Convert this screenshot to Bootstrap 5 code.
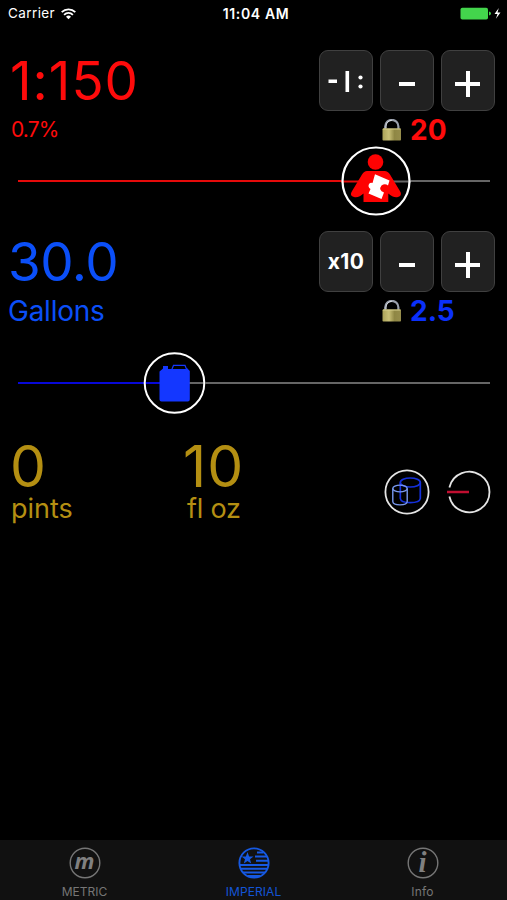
<!DOCTYPE html>
<html lang="en">
<head>
<meta charset="utf-8">
<meta name="viewport" content="width=device-width, initial-scale=1">
<title>Fuel mix</title>
<link href="https://cdn.jsdelivr.net/npm/bootstrap@5.3.0/dist/css/bootstrap.min.css" rel="stylesheet">
<style>
body{background:#000;font-family:Inter,"Liberation Sans",sans-serif;color:#fff;height:900px;overflow:hidden}
svg{display:block;flex:none;overflow:visible}
.status{height:27px;font-size:13.5px;padding:0 6px 0 8px}
.status>div{flex:1 1 0}
.ctl{height:61px;padding:0 12px 0 10px}
.sub{height:37px;padding-left:11px}
.big{font-size:53px;line-height:62px;font-weight:400}
.red{color:#fe0b0b}.blue{color:#0b4ff8}.gold{color:#b48f12}
.keys{gap:7px}
.key{width:54px;height:61px;background:#212121;border:1px solid #404040;border-radius:9px;padding:0;color:#fff;font-weight:700;font-size:21px}
.lock-val{width:125px;font-size:28px;font-weight:700;gap:8px}
.slider{padding:0 17px 0 18px}
.bar-line{height:2px;background:#666}
.tabs{height:60px;background:#111;font-size:12px;color:#767676}
.tab{padding-top:7px;line-height:14px;gap:6px;color:#767676;text-decoration:none}
.tab.on{color:#1355d6}
.unit{font-size:27px;line-height:24px;font-weight:400}
.amount{font-size:57px;line-height:60px;font-weight:400}
</style>
<script src="https://cdn.jsdelivr.net/npm/bootstrap@5.3.0/dist/js/bootstrap.bundle.min.js"></script>
</head>
<body class="d-flex flex-column m-0">
<svg width="0" height="0" class="position-absolute">
  <defs>
    <linearGradient id="brass"><stop offset="0" stop-color="#aaa258"/><stop offset=".35" stop-color="#c9c077"/><stop offset=".65" stop-color="#8f8744"/><stop offset="1" stop-color="#968d4c"/></linearGradient>
    <symbol id="lock" viewBox="0 0 20 22"><path d="M3.2 11V7.5a6.6 6.6 0 0 1 13.2 0V11" fill="none" stroke="#9aa0ac" stroke-width="2.2"/><path d="M4 9V7.2A6 6 0 0 1 10 1.2" fill="none" stroke="#d5dae0" stroke-width="1"/><rect x=".5" y="9.5" width="18.500" height="12" rx=".8" fill="url(#brass)"/><path d="M1 10h17.500" stroke="#d8d08d"/></symbol>
  </defs>
</svg>

<header class="status d-flex align-items-center">
  <div class="d-flex align-items-center"><span style="letter-spacing:.4px">Carrier</span>
    <svg width="15" height="12" viewBox="0 0 15 12" style="margin-left:6px" fill="none" stroke="#fff" stroke-width="1.800"><path d="M.7 4.100a9.600 9.600 0 0 1 13.600 0M3.100 6.800a6.200 6.200 0 0 1 8.800 0"/><path d="M7.500 11.300 5 8.800a3.500 3.500 0 0 1 5 0z" fill="#fff" stroke="none"/></svg>
  </div>
  <span class="fw-semibold" style="font-size:14px;letter-spacing:.65px;padding-left:3px">11:04 AM</span>
  <div class="d-flex justify-content-end align-items-center">
    <svg width="41" height="13" viewBox="0 0 41 13"><rect x=".5" y=".7" width="27.500" height="11.800" rx="1.800" fill="#43d54c"/><path d="M29 4.500q2 .3 2 2t-2 2z" fill="#43d54c"/><path d="M38.800.9 34.500 7h3l-1.600 4.800 4.600-6.300h-3z" fill="#fff"/></svg>
  </div>
</header>

<main class="flex-grow-1">
  <section style="padding-top:23px">
    <div class="ctl d-flex justify-content-between">
      <div class="big red" style="letter-spacing:1px">1:150</div>
      <div class="keys d-flex">
        <button class="btn key d-flex align-items-center justify-content-center" aria-label="Ratio format"><svg width="36" height="24" viewBox="0 0 36 24" fill="#fff"><path d="M.5 10.500h8.500v3.500H.5zM17.500 2h3.600v21h-3.600z"/><circle cx="32.500" cy="8.500" r="2.100"/><circle cx="32.500" cy="17.500" r="2.100"/></svg></button>
        <button class="btn key d-flex align-items-center justify-content-center" aria-label="Less"><svg width="16" height="4" viewBox="0 0 16 4" style="margin-top:7px"><path d="M0 0h16v4H0z" fill="#fff"/></svg></button>
        <button class="btn key d-flex align-items-center justify-content-center" aria-label="More"><svg width="26" height="26" viewBox="0 0 26 26" style="margin-top:7px"><path d="M0 11H11V0h4v11h10v4H15v11h-4V15H0z" fill="#fff"/></svg></button>
      </div>
    </div>
    <div class="sub d-flex align-items-center justify-content-between">
      <span class="red" style="font-size:21px;letter-spacing:-.9px">0.7%</span>
      <div class="lock-val d-flex align-items-center red"><svg width="20" height="22"><use href="#lock"/></svg><span>20</span></div>
    </div>
    <div class="slider d-flex align-items-center" style="height:65px">
      <div class="bar-line" style="width:323px;background:#e60a0a"></div>
      <svg width="70" height="70" viewBox="-35 -35 70 70">
        <path d="M-35 .5H0" stroke="#e60a0a" stroke-width="2"/><path d="M0 .5H35" stroke="#666" stroke-width="2"/>
        <circle r="33.500" fill="none" stroke="#fff" stroke-width="2.200"/>
        <circle cx="-.5" cy="-19" r="7.800" fill="#fe0202"/>
        <path d="M-9-10H8.500Q12-10 14-6.500L24.500 11Q26 15 22 16Q17 17 12.300 12.500V21H-12.500V12.500Q-17 17-22 16Q-26.500 15-24.500 11L-14-6.500Q-12-10-9-10Z" fill="#fe0202"/>
        <path d="M-1-6.800 13.500-.5 12 4.500Q9 2 5.500 4.500 2 9 8 11.500L5.500 18-7.500 12.500-5.500 8Q-8.500 6-7 3-5.500 1-3.500 2Z" fill="#fff"/>
      </svg>
      <div class="bar-line flex-grow-1"></div>
    </div>
  </section>

  <section style="padding-top:18px">
    <div class="ctl d-flex justify-content-between">
      <div class="big blue" style="letter-spacing:-.5px;margin-left:-2px">30.0</div>
      <div class="keys d-flex">
        <button class="btn key"><span style="letter-spacing:.3px">x10</span></button>
        <button class="btn key d-flex align-items-center justify-content-center" aria-label="Less"><svg width="16" height="4" viewBox="0 0 16 4" style="margin-top:7px"><path d="M0 0h16v4H0z" fill="#fff"/></svg></button>
        <button class="btn key d-flex align-items-center justify-content-center" aria-label="More"><svg width="26" height="26" viewBox="0 0 26 26" style="margin-top:7px"><path d="M0 11H11V0h4v11h10v4H15v11h-4V15H0z" fill="#fff"/></svg></button>
      </div>
    </div>
    <div class="sub d-flex align-items-center justify-content-between" style="padding-left:8px">
      <span class="blue" style="font-size:28px;letter-spacing:-.25px">Gallons</span>
      <div class="lock-val d-flex align-items-center" style="color:#0b30fa"><svg width="20" height="22"><use href="#lock"/></svg><span>2.5</span></div>
    </div>
    <div class="slider d-flex align-items-center" style="height:108px">
      <div class="bar-line" style="width:126px;background:#0808d8"></div>
      <svg width="61" height="62" viewBox="-30.500 -31 61 62">
        <path d="M-31 0H0" stroke="#0808d8" stroke-width="2"/><path d="M0 0H31" stroke="#666" stroke-width="2"/>
        <circle r="29.800" fill="none" stroke="#fff" stroke-width="2"/>
        <path d="M-15-11.500-11.500-14.500V-17H-6.500V-14H-3L-1.500-15H12.500L15.300-12V16.500Q15.300 18.600 13.200 18.600H-13Q-15 18.600-15 16.500Z" fill="#1437ff"/>
        <path d="M-2.500-14-1-17.600H10.500L12-14" fill="#000" stroke="#1437ff" stroke-width="1.200"/>
      </svg>
      <div class="bar-line flex-grow-1"></div>
    </div>
  </section>

  <section class="d-flex">
    <div style="width:176px;padding-left:11px"><div class="amount gold" style="margin-left:-1px">0</div><div class="unit gold">pints</div></div>
    <div style="width:208px;padding-left:7px"><div class="amount gold" style="letter-spacing:1px">10</div><div class="unit gold" style="padding-left:4px;letter-spacing:-.2px">fl oz</div></div>
    <div class="d-flex" style="gap:16px;padding-top:32px">
      <svg width="46" height="46" viewBox="-23 -23 46 46" fill="none">
        <circle r="21.600" stroke="#e4e4e4" stroke-width="1.800"/>
        <g stroke="#1430dc" stroke-width="1.700"><ellipse cx="3.300" cy="-9.500" rx="10" ry="4.500"/><path d="M-6.700-9.500V6.500C-6 12 12.500 12 13.300 6.500V-9.500"/></g>
        <g stroke="#7898f0" stroke-width="1.400"><ellipse cx="-7" cy="-3.500" rx="7.200" ry="3.400"/><path d="M-14.200-3.500V9.500C-14 14 0 14 .2 9.500V-3.500"/></g>
      </svg>
      <svg width="46" height="46" viewBox="-23 -23 46 46" fill="none"><path d="M-19.600-4.500A20.300 20.300 0 1 1-19.600 4.500" stroke="#e4e4e4" stroke-width="1.800"/><path d="M-22 0H0" stroke="#c00e30" stroke-width="2.500"/></svg>
    </div>
  </section>
</main>

<nav class="tabs nav nav-fill flex-nowrap">
  <a class="tab col-4 d-flex flex-column align-items-center" href="#">
    <svg width="32" height="32" viewBox="-16 -16 32 32"><circle r="14.800" fill="none" stroke="#767676" stroke-width="1.400"/><text x="-.5" y="5.500" text-anchor="middle" font-family="Open Sans,sans-serif" font-size="22" font-style="italic" font-weight="700" fill="#808080">m</text></svg>
    <span>METRIC</span></a>
  <a class="tab on col-4 d-flex flex-column align-items-center" href="#">
    <svg width="32" height="32" viewBox="-16 -16 32 32" stroke="#1659e2" fill="none"><circle r="14.600" stroke-width="1.900"/><path d="M3-10.500H9.500M1-6.500H13M2-2.300H14M-14 1.900H14M-13.500 5.700H13.500M-11 9.500H11M-6 13H6" stroke-width="2"/><path d="M-6.500-11-4.900-6.600H-.5L-4-3.800-2.800.5-6.500-2-10.200.5-9-3.800-12.500-6.600H-8.100Z" fill="#1659e2" stroke="none"/></svg>
    <span style="letter-spacing:.1px">IMPERIAL</span></a>
  <a class="tab col-4 d-flex flex-column align-items-center" href="#">
    <svg width="32" height="32" viewBox="-16 -16 32 32"><circle r="14.800" fill="none" stroke="#767676" stroke-width="1.400"/><text x="-.5" y="9" text-anchor="middle" font-family="Liberation Serif,serif" font-size="29" font-style="italic" font-weight="700" fill="#808080">i</text></svg>
    <span style="letter-spacing:.2px">Info</span></a>
</nav>
</body>
</html>
